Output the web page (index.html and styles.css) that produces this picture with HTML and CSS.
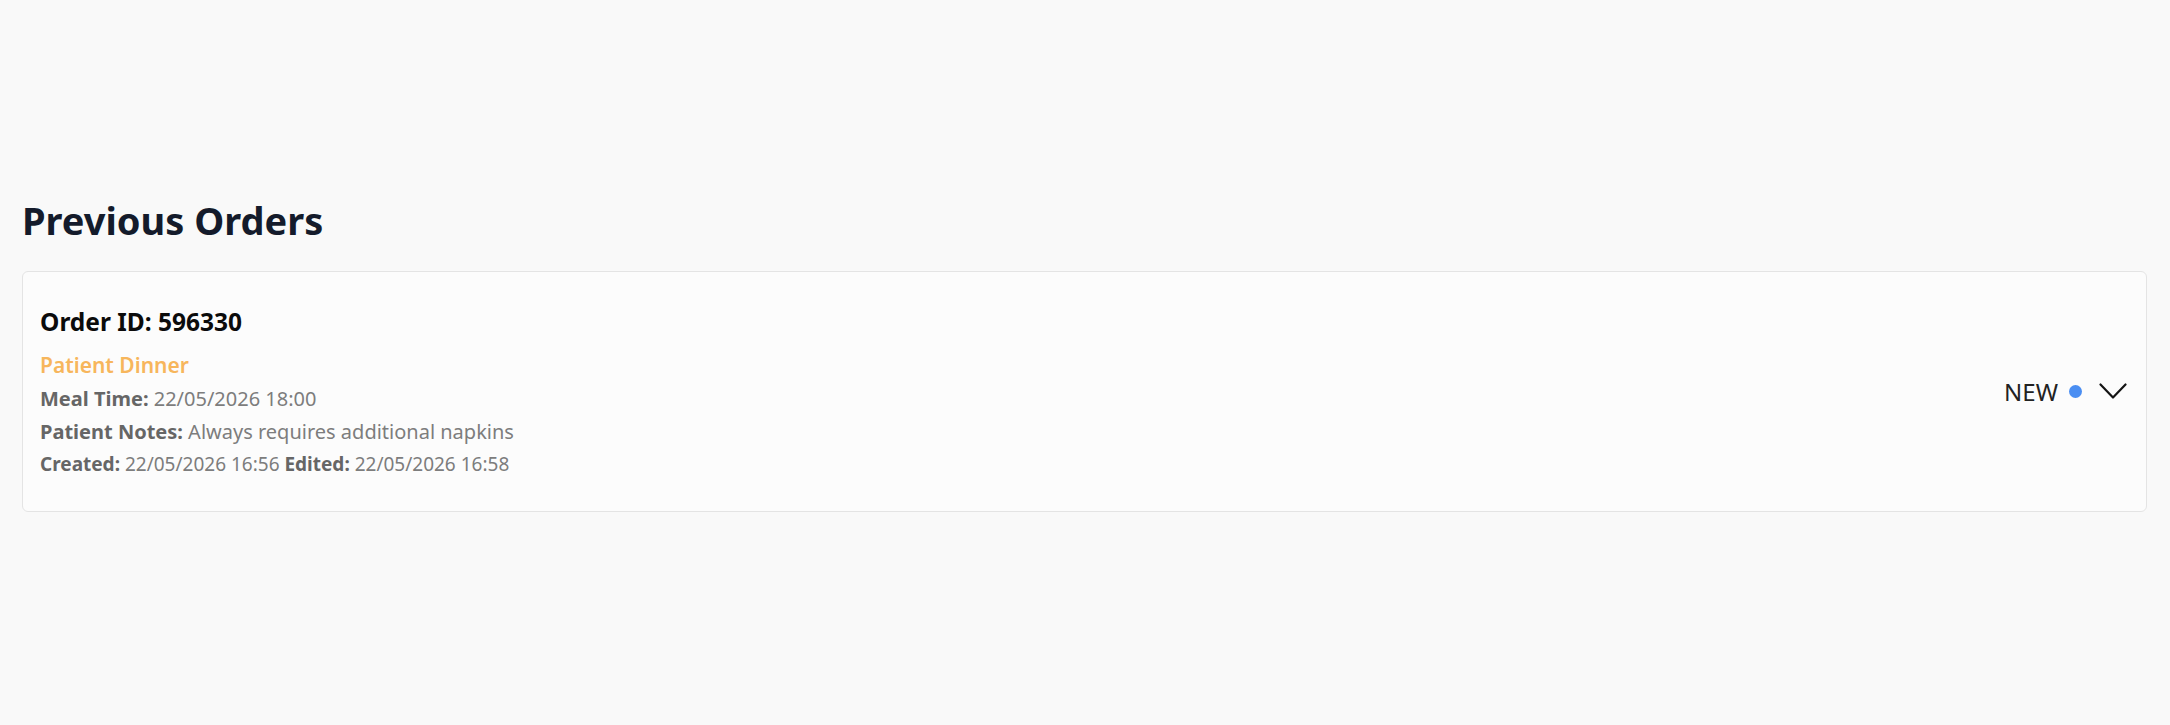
FILE: index.html
```html
<!DOCTYPE html>
<html>
  <head>
    <meta charset="UTF-8" />
    <title>Previous Orders</title>
    <link rel="stylesheet" href="styles.css">
  </head>
  <body>
    <main class="orders">
      <h2 class="orders-title">Previous Orders</h2>

      <!-- one card per order -->
      <div class="order-card">
        <div class="order-info">
          <h3 class="order-id">Order ID: 596330</h3>
          <p class="order-type">Patient Dinner</p>
          <p class="order-line"><b>Meal Time:</b> 22/05/2026 18:00</p>
          <p class="order-line"><b>Patient Notes:</b> Always requires additional napkins</p>
          <p class="order-meta"><b>Created:</b> 22/05/2026 16:56 <b>Edited:</b> 22/05/2026 16:58</p>
        </div>
        <div class="order-status">
          <span class="status-label">NEW</span>
          <span class="status-dot"></span>
          <svg class="chevron" width="28" height="17" viewBox="0 0 28 17">
            <path d="M1.5 1.5 L14 14.5 L26.5 1.5" fill="none" stroke="#141414" stroke-width="2.2" stroke-linecap="round" stroke-linejoin="round" />
          </svg>
        </div>
      </div>
    </main>
  </body>
</html>
```

FILE: styles.css
```css
body {
  margin: 0;
  font-family: "Noto Sans", "Open Sans", sans-serif;
  background-color: #f9f9f9;
  color: #222222;
}
.orders {
  padding: 197px 23px 0 22px;
}
.orders-title {
  margin: 0 0 28px 0;
  font-size: 38px;
  line-height: 46px;
  font-weight: 700;
  color: #141b2b;
}
.order-card {
  display: flex;
  align-items: center;
  justify-content: space-between;
  padding: 34px 19px 34px 17px;
  border: 1px solid #e4e4e4;
  border-radius: 6px;
  background-color: #fcfcfc;
}
.order-id {
  margin: 0 0 13px 0;
  font-size: 24.5px;
  line-height: 32px;
  font-weight: 700;
  color: #0b0b0b;
}
.order-type {
  margin: 0 0 6px 0;
  font-size: 21px;
  line-height: 28px;
  font-weight: 600;
  color: #f7b65c;
}
.order-line {
  margin: 0 0 5px 0;
  font-size: 20px;
  line-height: 28px;
  color: #7d7d7d;
}
.order-meta {
  margin: 0;
  font-size: 19px;
  line-height: 26px;
  color: #7d7d7d;
}
.order-line b,
.order-meta b {
  font-weight: 700;
  color: #666666;
}
.order-status {
  display: flex;
  align-items: center;
}
.status-label {
  font-size: 24px;
  line-height: 30px;
  color: #222222;
}
.status-dot {
  width: 13px;
  height: 13px;
  margin: 0 17px 0 11px;
  border-radius: 50%;
  background-color: #4a8ef2;
}
.chevron {
  display: block;
}
```
